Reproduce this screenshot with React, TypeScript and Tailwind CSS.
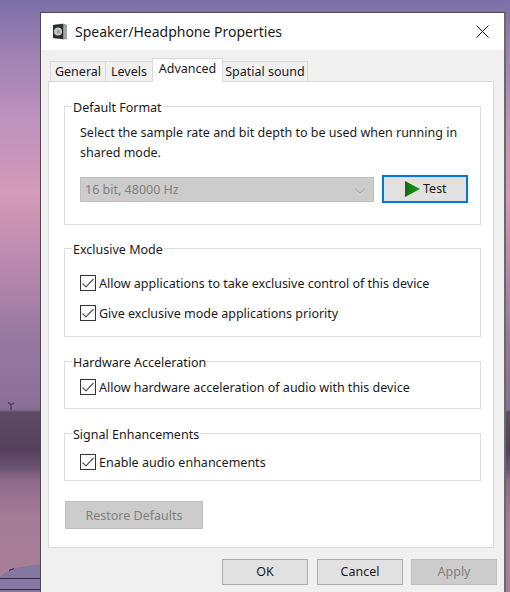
import React from "react";

function Check() {
  return (
    <span className="w-[16px] h-[16px] shrink-0 border border-[#333333] bg-white flex items-center justify-center">
      <svg width="14" height="14" viewBox="0 0 14 14" fill="none">
        <path d="M1.5 7.5 L5 11 L12.5 3" stroke="#555555" strokeWidth="1.2" />
      </svg>
    </span>
  );
}

function CheckRow({ label }: { label: string }) {
  return (
    <div className="flex items-center gap-[3px] h-[16px]">
      <Check />
      <span className="pt-[2px]">{label}</span>
    </div>
  );
}

function Group({ title, className, children }: { title: string; className: string; children: React.ReactNode }) {
  return (
    <div className={"relative border border-[#dcdcdc] " + className}>
      <span className="absolute left-[7px] top-[-8px] bg-white px-[1px] leading-[18px]">{title}</span>
      {children}
    </div>
  );
}

function Btn({ label, className }: { label: string; className: string }) {
  return (
    <div className={"h-[26px] w-[86px] pt-[1px] flex items-center justify-center border " + className}>{label}</div>
  );
}

function SpeakerIcon() {
  return (
    <svg width="16" height="17" viewBox="0 0 16 17" className="shrink-0">
      <path d="M1 2 L11 0.5 L15 2 L15 16 L11 16.5 L1 15 Z" fill="#8c8c8c" />
      <path d="M1 2 L11 1 L11 16 L1 15 Z" fill="#2b2b2b" />
      <circle cx="6" cy="8.5" r="4" fill="#c4c8cc" />
      <circle cx="6.4" cy="8.7" r="1.6" fill="#8f9499" />
      <path d="M12 2 L15 2.5 L15 15.5 L12 16 Z" fill="#a3a3a3" />
    </svg>
  );
}

const tabBase = "h-[21px] pt-[1px] flex items-center justify-center border border-[#d9d9d9] border-b-0 -ml-px first:ml-0";

export default function App() {
  return (
    <div
      className="relative w-[510px] h-[592px] overflow-hidden pl-[40px] pt-[12px] bg-[linear-gradient(180deg,#7b70a5_0px,#a184b3_60px,#bd92bd_120px,#d39bb6_195px,#b889ad_265px,#96789f_340px,#8a7098_408px,#7e6d86_410px,#5f4b66_412px,#54415b_449px,#6b5272_468px,#8e6b88_480px,#a57d96_520px,#ab8098_592px)] font-['Noto_Sans',sans-serif] text-[12.5px] text-[#1a1a1a]"
    >
      <svg className="absolute left-0 bottom-0" width="41" height="30" viewBox="0 0 41 30">
        <path d="M0 15 L10 7 L33 3 L41 2 L41 30 L0 30 Z" fill="#8478a0" />
        <path d="M9 8 L14 6 L14 7 L9 9 Z" fill="#2a2535" />
        <rect x="0" y="16" width="41" height="1" fill="#2f2a3c" />
        <rect x="0" y="27" width="41" height="1" fill="#2f2a3c" />
      </svg>
      <svg className="absolute left-[7px] top-[401px]" width="8" height="10" viewBox="0 0 8 10">
        <path d="M1 1 L4 4 L7 2 M4 4 L4 9" stroke="#4a3a55" strokeWidth="1.2" fill="none" />
      </svg>
      <div className="relative w-[466px] h-[600px] border-l border-t border-[#4a4a4a] border-r-2 border-r-[#6a6a6a] bg-[#f0f0f0]">
        <div className="h-[37px] bg-white flex items-center pl-[11px] pr-[15px]">
          <SpeakerIcon />
          <span className="ml-[7px] text-[14px] text-[#1a1a1a]">Speaker/Headphone Properties</span>
          <svg className="ml-auto" width="13" height="13" viewBox="0 0 13 13">
            <path d="M0.5 0.5 L12.5 12.5 M12.5 0.5 L0.5 12.5" stroke="#111111" strokeWidth="1" fill="none" />
          </svg>
        </div>
        <div className="relative z-10 h-[32px] -mb-px flex items-end pl-[9px]">
          <div className={tabBase + " w-[56px]"}>General</div>
          <div className={tabBase + " w-[48px]"}>Levels</div>
          <div className={"h-[24px] w-[71px] -ml-px bg-white flex items-start pt-[1px] justify-center border border-[#d9d9d9] border-b-0"}>Advanced</div>
          <div className={tabBase + " w-[86px]"}>Spatial sound</div>
        </div>
        <div className="ml-[7px] w-[446px] h-[467px] bg-white border border-[#d9d9d9] pl-[15px] pt-[24px]">
          <Group title="Default Format" className="w-[417px] h-[119px] pl-[15px] pt-[16px] mb-[23px]">
            <p className="w-[385px] leading-[20px]">Select the sample rate and bit depth to be used when running in shared mode.</p>
            <div className="flex items-center gap-[8px] mt-[12px]">
              <div className="w-[294px] h-[25px] pt-[3px] bg-[#cccccc] border border-[#bfbfbf] flex items-center pl-[4px] pr-[8px] text-[#808080]">
                <span>16 bit, 48000 Hz</span>
                <svg className="ml-auto" width="10" height="6" viewBox="0 0 10 6">
                  <path d="M0.5 0.5 L5 5 L9.5 0.5" stroke="#a8a8a8" fill="none" />
                </svg>
              </div>
              <div className="w-[86px] h-[28px] bg-[#e1e1e1] border-2 border-[#0078d7] pl-[21px] flex items-center gap-[3px]">
                <svg width="15" height="16" viewBox="0 0 15 16">
                  <defs>
                    <linearGradient id="g" x1="0" y1="0" x2="1" y2="0">
                      <stop offset="0" stopColor="#0b6e0b" />
                      <stop offset="1" stopColor="#1f9a1f" />
                    </linearGradient>
                  </defs>
                  <path d="M0 0 L15 8 L0 16 Z" fill="url(#g)" />
                </svg>
                <span className="pt-[1px]">Test</span>
              </div>
            </div>
          </Group>
          <Group title="Exclusive Mode" className="w-[417px] h-[89px] pl-[15px] pt-[26px] mb-[24px]">
            <div className="flex flex-col gap-[14px]">
              <CheckRow label="Allow applications to take exclusive control of this device" />
              <CheckRow label="Give exclusive mode applications priority" />
            </div>
          </Group>
          <Group title="Hardware Acceleration" className="w-[417px] h-[48px] pl-[15px] pt-[17px] mb-[24px]">
            <CheckRow label="Allow hardware acceleration of audio with this device" />
          </Group>
          <Group title="Signal Enhancements" className="w-[417px] h-[48px] pl-[15px] pt-[20px]">
            <CheckRow label="Enable audio enhancements" />
          </Group>
          <div className="mt-[20px] ml-px w-[138px] h-[28px] pt-[2px] bg-[#cccccc] border border-[#bfbfbf] flex items-center justify-center text-[#808080]">
            Restore Defaults
          </div>
        </div>
        <div className="flex pl-[181px] pt-[11px]">
          <Btn label="OK" className="bg-[#e1e1e1] border-[#adadad]" />
          <Btn label="Cancel" className="ml-[9px] bg-[#e1e1e1] border-[#adadad]" />
          <Btn label="Apply" className="ml-[8px] bg-[#cccccc] border-[#bfbfbf] text-[#808080]" />
        </div>
      </div>
    </div>
  );
}
